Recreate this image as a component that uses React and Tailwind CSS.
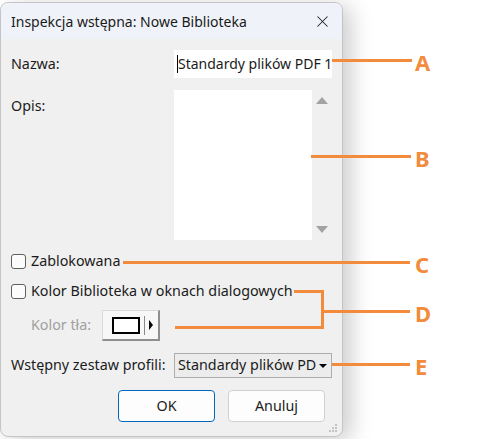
import { X } from 'lucide-react'

const font = { fontFamily: '"Noto Sans", "Open Sans", sans-serif' }

function Checkbox({ label }) {
  return (
    <div className="flex items-center h-[20px]">
      <span className="w-[15px] h-[15px] rounded-[3px] border border-[#5f5f5f] bg-[#fbfbfb]" />
      <span className="ml-[5px] text-[14.3px] text-[#1b1b1b] leading-none">{label}</span>
    </div>
  )
}

function Callout({ letter, top }) {
  return (
    <div className="absolute left-[415px] text-[22px] font-bold text-[#f28b3c] leading-none" style={{ top }}>
      {letter}
    </div>
  )
}

export default function App() {
  return (
    <div className="relative w-[478px] h-[439px] bg-white overflow-hidden" style={font}>
      <div className="mt-[2px] w-[343px] h-[435px] rounded-[8px] border border-[#c4c4c4] bg-[#f0f0f0] overflow-hidden shadow-[8px_4px_22px_rgba(0,0,0,0.2)] flex flex-col">
        {/* title bar */}
        <div className="h-[36px] bg-[#eff3f9] flex items-center pl-[10px] pr-[10px] shrink-0">
          <span className="text-[14px] text-[#1a1a1a]">Inspekcja wstępna: Nowe Biblioteka</span>
          <X className="ml-auto w-[19px] h-[19px] text-[#222]" strokeWidth={1.3} />
        </div>

        <div className="pl-[10px] flex flex-col">
          {/* name */}
          <div className="flex mt-[11px] h-[28px]">
            <span className="w-[163px] text-[14.3px] text-[#1b1b1b] pt-[7px] leading-none">Nazwa:</span>
            <div className="w-[158px] h-[28px] bg-white flex items-center whitespace-nowrap pl-[3px]">
              <span className="w-px h-[18px] bg-black shrink-0" />
              <span className="text-[14px] text-[#1b1b1b] leading-none">Standardy plików PDF 1</span>
            </div>
          </div>

          {/* description */}
          <div className="flex mt-[12px] h-[150px]">
            <span className="w-[163px] text-[14.3px] text-[#1b1b1b] pt-[9px] leading-none">Opis:</span>
            <div className="w-[138px] h-[150px] bg-white" />
            <div className="w-[20px] flex flex-col items-center justify-between py-[7px]">
              <span className="w-0 h-0 border-l-[6px] border-r-[6px] border-b-[7px] border-l-transparent border-r-transparent border-b-[#a3a3a3]" />
              <span className="w-0 h-0 border-l-[6px] border-r-[6px] border-t-[7px] border-l-transparent border-r-transparent border-t-[#a3a3a3]" />
            </div>
          </div>

          <div className="mt-[11px]">
            <Checkbox label="Zablokowana" />
          </div>
          <div className="mt-[10px]">
            <Checkbox label="Kolor Biblioteka w oknach dialogowych" />
          </div>

          {/* background colour */}
          <div className="flex items-center mt-[9px] h-[31px] pl-[20px]">
            <span className="text-[14.3px] text-[#a0a0a0] leading-none w-[71px]">Kolor tła:</span>
            <div className="w-[58px] h-[31px] bg-[#f7f7f7] border border-[#d9d9d9] border-r-[#8f8f8f] border-b-[#8f8f8f] border-r-2 border-b-2 flex items-center pl-[9px]">
              <span className="w-[28px] h-[17px] border-2 border-black bg-white" />
              <span className="ml-[4px] w-px h-[19px] bg-[#8a8a8a]" />
              <span className="ml-[4px] w-0 h-0 border-t-[5px] border-b-[5px] border-l-[4px] border-t-transparent border-b-transparent border-l-black" />
            </div>
          </div>

          {/* profile set */}
          <div className="flex items-center mt-[12px] h-[25px]">
            <span className="w-[163px] text-[14.3px] text-[#1b1b1b] leading-none">Wstępny zestaw profili:</span>
            <div className="w-[158px] h-[25px] bg-[#ececec] border border-[#adadad] flex items-center pl-[3px] pr-[4px] whitespace-nowrap">
              <span className="text-[14.3px] text-[#1b1b1b] leading-none">Standardy plików PD</span>
              <span className="ml-auto w-0 h-0 border-l-[4px] border-r-[4px] border-t-[4px] border-l-transparent border-r-transparent border-t-black" />
            </div>
          </div>

          {/* buttons */}
          <div className="flex mt-[12px] pl-[107px] gap-[13px]">
            <button className="w-[97px] h-[32px] rounded-[4px] border border-[#0067c0] bg-[#fdfdfd] text-[14.3px] text-[#1b1b1b]">OK</button>
            <button className="w-[97px] h-[32px] rounded-[4px] border border-[#d0d0d0] bg-[#fdfdfd] text-[14.3px] text-[#1b1b1b]">Anuluj</button>
          </div>

          {/* grip */}
          <div className="flex justify-end pr-[4px] mt-[2px]">
            <svg width="10" height="10" viewBox="0 0 10 10">
              <rect x="7" y="0" width="2" height="2" fill="#c3c3c3" />
              <rect x="4" y="3" width="2" height="2" fill="#c3c3c3" />
              <rect x="7" y="3" width="2" height="2" fill="#c3c3c3" />
              <rect x="1" y="6" width="2" height="2" fill="#c3c3c3" />
              <rect x="4" y="6" width="2" height="2" fill="#c3c3c3" />
              <rect x="7" y="6" width="2" height="2" fill="#c3c3c3" />
            </svg>
          </div>
        </div>
      </div>

      {/* callout lines */}
      <div className="absolute left-[332px] top-[59px] w-[80px] h-[3px] bg-[#f28b3c]" />
      <Callout letter="A" top={51} />
      <div className="absolute left-[311px] top-[155px] w-[100px] h-[3px] bg-[#f28b3c]" />
      <Callout letter="B" top={147} />
      <div className="absolute left-[123px] top-[261px] w-[287px] h-[3px] bg-[#f28b3c]" />
      <Callout letter="C" top={253} />
      <div className="absolute left-[294px] top-[290px] w-[30px] h-[3px] bg-[#f28b3c]" />
      <div className="absolute left-[321px] top-[290px] w-[3px] h-[39px] bg-[#f28b3c]" />
      <div className="absolute left-[175px] top-[326px] w-[149px] h-[3px] bg-[#f28b3c]" />
      <div className="absolute left-[321px] top-[310px] w-[89px] h-[3px] bg-[#f28b3c]" />
      <Callout letter="D" top={302} />
      <div className="absolute left-[332px] top-[363px] w-[78px] h-[3px] bg-[#f28b3c]" />
      <Callout letter="E" top={355} />
    </div>
  )
}
